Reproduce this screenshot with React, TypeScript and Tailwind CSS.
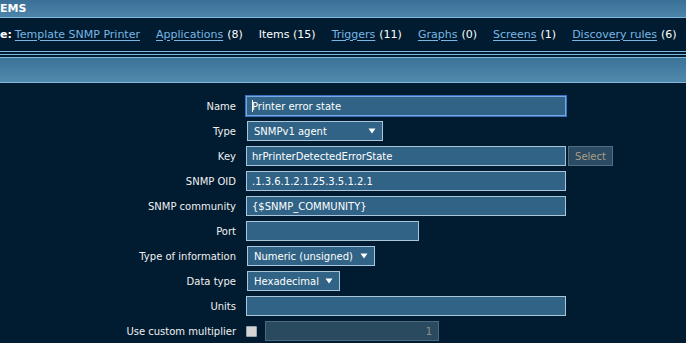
import React from "react";

const font = { fontFamily: '"DejaVu Sans", Verdana, sans-serif' };

function Label({ children }: { children: React.ReactNode }) {
  return (
    <div className="flex items-center justify-end h-[20px] text-[10px] text-[#f0f0f0] whitespace-nowrap">
      {children}
    </div>
  );
}

function TextInput({ value, w, focused }: { value?: string; w: string; focused?: boolean }) {
  return (
    <div
      className={
        "h-[20px] flex items-center pl-[5px] text-[10px] text-white bg-[#306385] border " +
        (focused ? "border-[#78a8e4] outline outline-1 outline-[#3a72c0]" : "border-[#a9c6da]") +
        " " +
        w
      }
    >
      {focused && <span className="inline-block w-[1px] h-[12px] bg-white mr-[-1px]" />}
      <span>{value}</span>
    </div>
  );
}

function Arrow() {
  return (
    <svg width="8" height="6" viewBox="0 0 8 6" className="shrink-0">
      <polygon points="0.5,0.5 7.5,0.5 4,5.5" fill="#ffffff" />
    </svg>
  );
}

function SelectBox({ value, w }: { value: string; w: string }) {
  return (
    <div
      className={
        "h-[20px] ml-[1px] flex items-center justify-between pl-[6px] pr-[6px] text-[10px] text-white bg-[#306385] border border-[#a9c6da] " +
        w
      }
    >
      <span>{value}</span>
      <Arrow />
    </div>
  );
}

export default function App() {
  const linkCls = "text-[#79b6e4] underline underline-offset-[2px]";
  return (
    <div className="w-[686px] h-[343px] overflow-hidden bg-[#011c30]" style={font}>
      {/* Header */}
      <div className="h-[17px] bg-gradient-to-b from-[#3a7097] to-[#4d84aa] flex items-center">
        <span className="text-white font-bold text-[11px] leading-none">EMS</span>
      </div>
      <div className="h-[1px] bg-[#80b8de]" />
      {/* Nav */}
      <div className="h-[33px] pt-[1px] flex items-center text-[11px] text-white whitespace-nowrap">
        <span className="font-bold">e:</span>
        <span className={linkCls + " ml-[3px]"}>Template SNMP Printer</span>
        <span className={linkCls + " ml-[16px]"}>Applications</span>
        <span className="ml-[4px]">(8)</span>
        <span className="ml-[16px]">Items (15)</span>
        <span className={linkCls + " ml-[16px]"}>Triggers</span>
        <span className="ml-[4px]">(11)</span>
        <span className={linkCls + " ml-[16px]"}>Graphs</span>
        <span className="ml-[4px]">(0)</span>
        <span className={linkCls + " ml-[16px]"}>Screens</span>
        <span className="ml-[4px]">(1)</span>
        <span className={linkCls + " ml-[16px]"}>Discovery rules</span>
        <span className="ml-[4px]">(6)</span>
      </div>
      <div className="h-[1px] bg-[#80b8de]" />
      <div className="h-[2px]" />
      <div className="h-[1px] bg-[#80b8de]" />
      <div className="h-[2px]" />
      <div className="h-[26px] border-t border-b border-[#80b8de] bg-gradient-to-b from-[#3b7398] to-[#5189ad]" />

      {/* Form */}
      <div className="mt-[13px] grid grid-cols-[236px_auto] gap-x-[10px] gap-y-[5px] items-center">
        <Label>Name</Label>
        <TextInput value="Printer error state" w="w-[320px]" focused />

        <Label>Type</Label>
        <SelectBox value="SNMPv1 agent" w="w-[136px]" />

        <Label>Key</Label>
        <div className="flex items-center gap-[2px]">
          <TextInput value="hrPrinterDetectedErrorState" w="w-[320px]" />
          <div className="h-[20px] w-[45px] flex items-center justify-center text-[10px] text-[#a89f88] bg-[#2b4b63] border border-[#4f6e86]">
            Select
          </div>
        </div>

        <Label>SNMP OID</Label>
        <TextInput value=".1.3.6.1.2.1.25.3.5.1.2.1" w="w-[320px]" />

        <Label>SNMP community</Label>
        <TextInput value="{$SNMP_COMMUNITY}" w="w-[320px]" />

        <Label>Port</Label>
        <TextInput value="" w="w-[173px]" />

        <Label>Type of information</Label>
        <SelectBox value="Numeric (unsigned)" w="w-[128px]" />

        <Label>Data type</Label>
        <SelectBox value="Hexadecimal" w="w-[93px]" />

        <Label>Units</Label>
        <TextInput value="" w="w-[320px]" />

        <Label>Use custom multiplier</Label>
        <div className="flex items-center">
          <div className="w-[11px] h-[11px] bg-[#d4d4d4] border border-[#9aa4ab] rounded-[1px]" />
          <div className="ml-[8px] h-[20px] w-[174px] flex items-center justify-end pr-[6px] text-[10px] text-[#8f8f80] bg-[#2a4a60] border border-[#4b6a80]">
            1
          </div>
        </div>
      </div>
    </div>
  );
}
